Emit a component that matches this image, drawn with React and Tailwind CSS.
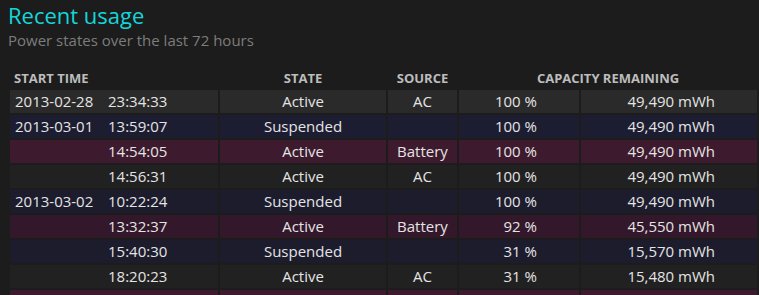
const ROWS = [
  { date: '2013-02-28', time: '23:34:33', state: 'Active', source: 'AC', pct: '100 %', cap: '49,490 mWh', kind: 'ac', even: true },
  { date: '2013-03-01', time: '13:59:07', state: 'Suspended', source: '', pct: '100 %', cap: '49,490 mWh', kind: 'sus', even: false },
  { date: '', time: '14:54:05', state: 'Active', source: 'Battery', pct: '100 %', cap: '49,490 mWh', kind: 'dc', even: true },
  { date: '', time: '14:56:31', state: 'Active', source: 'AC', pct: '100 %', cap: '49,490 mWh', kind: 'ac', even: false },
  { date: '2013-03-02', time: '10:22:24', state: 'Suspended', source: '', pct: '100 %', cap: '49,490 mWh', kind: 'sus', even: true },
  { date: '', time: '13:32:37', state: 'Active', source: 'Battery', pct: '92 %', cap: '45,550 mWh', kind: 'dc', even: false },
  { date: '', time: '15:40:30', state: 'Suspended', source: '', pct: '31 %', cap: '15,570 mWh', kind: 'sus', even: true },
  { date: '', time: '18:20:23', state: 'Active', source: 'AC', pct: '31 %', cap: '15,480 mWh', kind: 'ac', even: false },
  // next row only peeks in at the bottom edge, no text visible
  { date: '', time: '', state: '', source: '', pct: '', cap: '', kind: 'dc', even: true },
]

const ROW_BG = {
  ac: { true: 'bg-[#2a2a2a]', false: 'bg-[#212121]' },
  sus: { true: 'bg-[#1c1c2d]', false: 'bg-[#1d1d31]' },
  dc: { true: 'bg-[#3d1a2d]', false: 'bg-[#33172a]' },
}

export default function App() {
  return (
    <div
      className="w-[759px] h-[295px] overflow-hidden bg-[#1c1c1c] pl-2 pt-[2px] text-[#e4e4e4]"
      style={{ fontFamily: '"Open Sans", "Noto Sans", sans-serif' }}
    >
      <h1 className="text-[22px] leading-[26px] text-[#14d6da]">Recent usage</h1>
      <p className="mt-[2px] text-[15px] leading-[20px] text-[#7c7c7c]">Power states over the last 72 hours</p>

      <table className="mt-[17px] w-[751px] table-fixed border-separate border-spacing-[2px]">
        <colgroup>
          <col className="w-[208px]" />
          <col className="w-[166px]" />
          <col className="w-[69px]" />
          <col className="w-[120px]" />
          <col className="w-[176px]" />
        </colgroup>
        <thead>
          <tr className="text-[13px] leading-[19px] font-bold uppercase text-[#bdbdbd]">
            <th className="p-0 pl-1 text-left font-bold">Start time</th>
            <th className="p-0 text-center font-bold">State</th>
            <th className="p-0 text-center font-bold">Source</th>
            <th colSpan={2} className="p-0 text-center font-bold">Capacity remaining</th>
          </tr>
        </thead>
        <tbody>
          {ROWS.map((r, i) => {
            const bg = ROW_BG[r.kind][r.even]
            return (
              <tr key={i} className="text-[15px] leading-[23px]">
                <td className={`${bg} h-[23px] p-0 pl-[5px] whitespace-nowrap`}>
                  <span className="inline-block w-[93px]">{r.date}</span>
                  <span>{r.time}</span>
                </td>
                <td className={`${bg} h-[23px] p-0 text-center`}>{r.state}</td>
                <td className={`${bg} h-[23px] p-0 text-center`}>{r.source}</td>
                <td className={`${bg} h-[23px] p-0 pr-[42px] text-right`}>{r.pct}</td>
                <td className={`${bg} h-[23px] p-0 pr-[42px] text-right`}>{r.cap}</td>
              </tr>
            )
          })}
        </tbody>
      </table>
    </div>
  )
}
